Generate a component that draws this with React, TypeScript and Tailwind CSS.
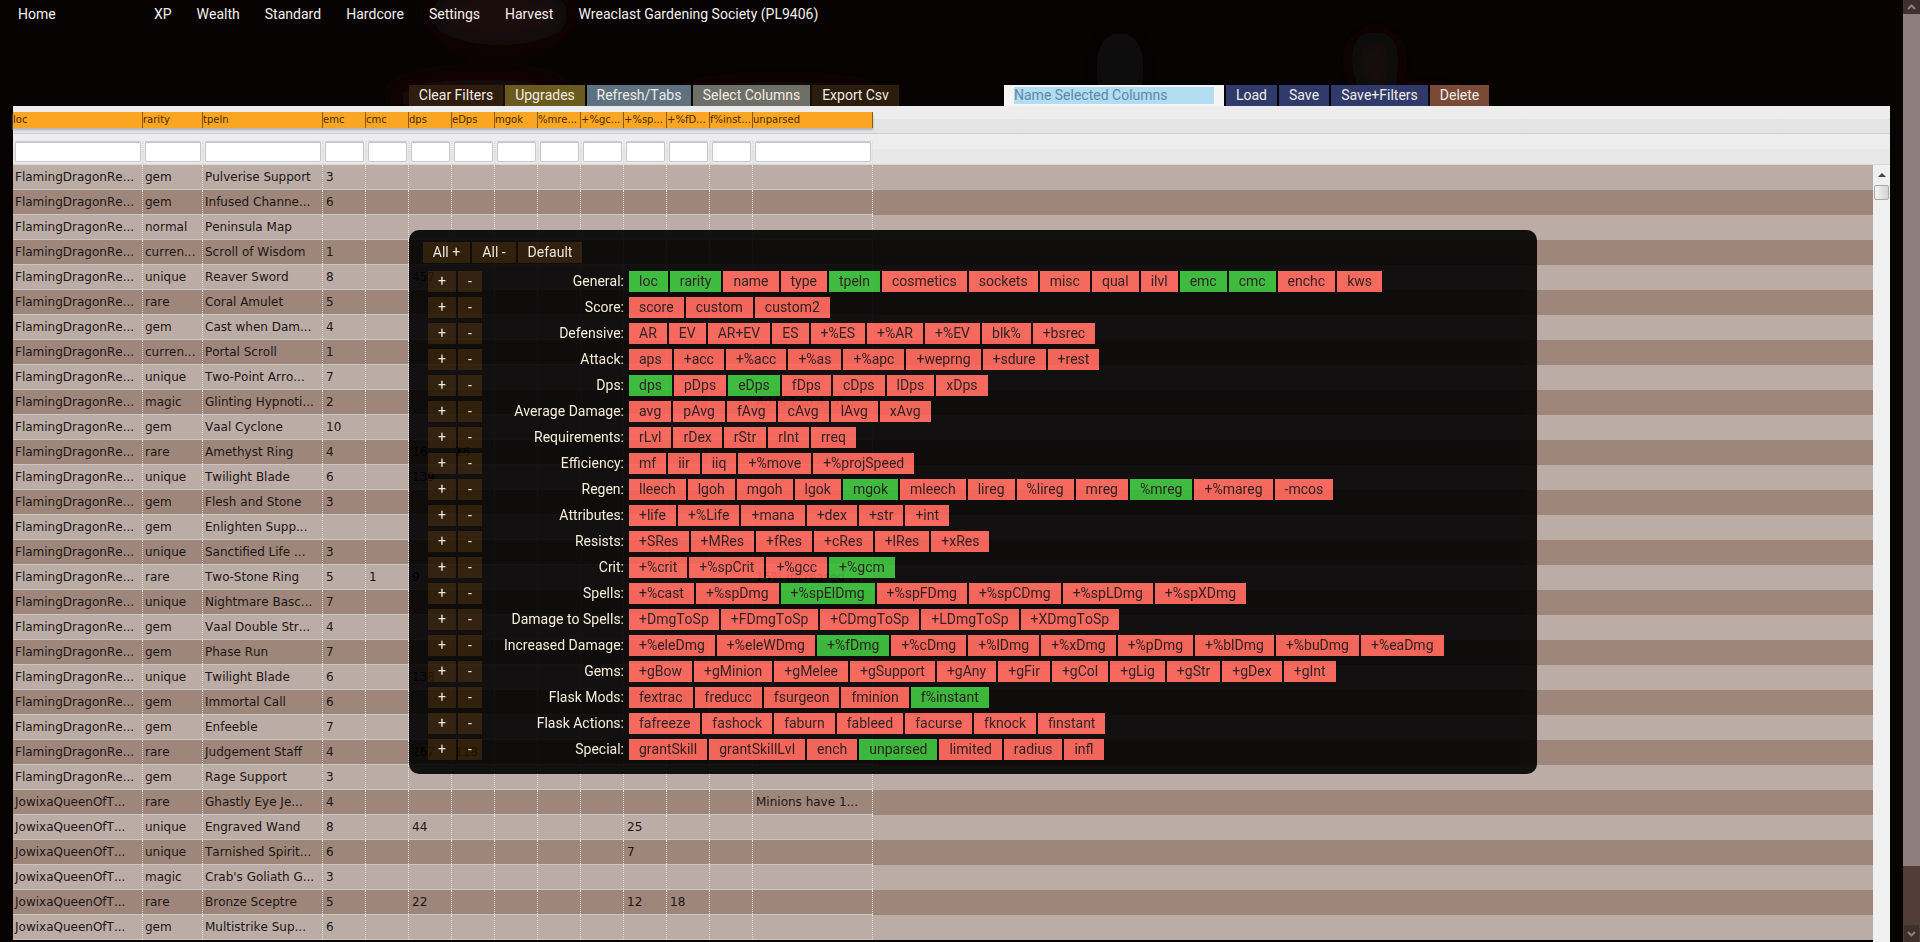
import React from 'react'

type Row = { rarity: string; name: string; emc?: string; cells?: Record<number, string>; owner?: string }

const FLAMING = 'FlamingDragonRe...'
const JOWIXA = 'JowixaQueenOfT...'

const headers = ['loc', 'rarity', 'tpeln', 'emc', 'cmc', 'dps', 'eDps', 'mgok', '%mre...', '+%gc...', '+%sp...', '+%fD...', 'f%inst...', 'unparsed']

const rows: Row[] = [
  { rarity: 'gem', name: 'Pulverise Support', emc: '3' },
  { rarity: 'gem', name: 'Infused Channe...', emc: '6' },
  { rarity: 'normal', name: 'Peninsula Map' },
  { rarity: 'curren...', name: 'Scroll of Wisdom', emc: '1' },
  { rarity: 'unique', name: 'Reaver Sword', emc: '8', cells: { 5: '457' } },
  { rarity: 'rare', name: 'Coral Amulet', emc: '5' },
  { rarity: 'gem', name: 'Cast when Dam...', emc: '4' },
  { rarity: 'curren...', name: 'Portal Scroll', emc: '1' },
  { rarity: 'unique', name: 'Two-Point Arro...', emc: '7' },
  { rarity: 'magic', name: 'Glinting Hypnoti...', emc: '2', cells: { 13: 'Adds 1 to 4 Ph...' } },
  { rarity: 'gem', name: 'Vaal Cyclone', emc: '10' },
  { rarity: 'rare', name: 'Amethyst Ring', emc: '4', cells: { 5: '16', 6: '16' } },
  { rarity: 'unique', name: 'Twilight Blade', emc: '6', cells: { 5: '139' } },
  { rarity: 'gem', name: 'Flesh and Stone', emc: '3' },
  { rarity: 'gem', name: 'Enlighten Supp...' },
  { rarity: 'unique', name: 'Sanctified Life ...', emc: '3' },
  { rarity: 'rare', name: 'Two-Stone Ring', emc: '5', cells: { 4: '1', 5: '9', 13: '15% increased ...' } },
  { rarity: 'unique', name: 'Nightmare Basc...', emc: '7' },
  { rarity: 'gem', name: 'Vaal Double Str...', emc: '4' },
  { rarity: 'gem', name: 'Phase Run', emc: '7' },
  { rarity: 'unique', name: 'Twilight Blade', emc: '6', cells: { 5: '138' } },
  { rarity: 'gem', name: 'Immortal Call', emc: '6' },
  { rarity: 'gem', name: 'Enfeeble', emc: '7' },
  { rarity: 'rare', name: 'Judgement Staff', emc: '4', cells: { 5: '267', 6: '118' } },
  { rarity: 'gem', name: 'Rage Support', emc: '3' },
  { owner: JOWIXA, rarity: 'rare', name: 'Ghastly Eye Je...', emc: '4', cells: { 13: 'Minions have 1...' } },
  { owner: JOWIXA, rarity: 'unique', name: 'Engraved Wand', emc: '8', cells: { 5: '44', 10: '25' } },
  { owner: JOWIXA, rarity: 'unique', name: 'Tarnished Spirit...', emc: '6', cells: { 10: '7' } },
  { owner: JOWIXA, rarity: 'magic', name: "Crab's Goliath G...", emc: '3' },
  { owner: JOWIXA, rarity: 'rare', name: 'Bronze Sceptre', emc: '5', cells: { 5: '22', 10: '12', 11: '18' } },
  { owner: JOWIXA, rarity: 'gem', name: 'Multistrike Sup...', emc: '6' },
]

const groups: [string, string[], string[]][] = [
  ['General', ['loc', 'rarity', 'name', 'type', 'tpeln', 'cosmetics', 'sockets', 'misc', 'qual', 'ilvl', 'emc', 'cmc', 'enchc', 'kws'], ['loc', 'rarity', 'tpeln', 'emc', 'cmc']],
  ['Score', ['score', 'custom', 'custom2'], []],
  ['Defensive', ['AR', 'EV', 'AR+EV', 'ES', '+%ES', '+%AR', '+%EV', 'blk%', '+bsrec'], []],
  ['Attack', ['aps', '+acc', '+%acc', '+%as', '+%apc', '+weprng', '+sdure', '+rest'], []],
  ['Dps', ['dps', 'pDps', 'eDps', 'fDps', 'cDps', 'lDps', 'xDps'], ['dps', 'eDps']],
  ['Average Damage', ['avg', 'pAvg', 'fAvg', 'cAvg', 'lAvg', 'xAvg'], []],
  ['Requirements', ['rLvl', 'rDex', 'rStr', 'rInt', 'rreq'], []],
  ['Efficiency', ['mf', 'iir', 'iiq', '+%move', '+%projSpeed'], []],
  ['Regen', ['lleech', 'lgoh', 'mgoh', 'lgok', 'mgok', 'mleech', 'lireg', '%lireg', 'mreg', '%mreg', '+%mareg', '-mcos'], ['mgok', '%mreg']],
  ['Attributes', ['+life', '+%Life', '+mana', '+dex', '+str', '+int'], []],
  ['Resists', ['+SRes', '+MRes', '+fRes', '+cRes', '+lRes', '+xRes'], []],
  ['Crit', ['+%crit', '+%spCrit', '+%gcc', '+%gcm'], ['+%gcm']],
  ['Spells', ['+%cast', '+%spDmg', '+%spElDmg', '+%spFDmg', '+%spCDmg', '+%spLDmg', '+%spXDmg'], ['+%spElDmg']],
  ['Damage to Spells', ['+DmgToSp', '+FDmgToSp', '+CDmgToSp', '+LDmgToSp', '+XDmgToSp'], []],
  ['Increased Damage', ['+%eleDmg', '+%eleWDmg', '+%fDmg', '+%cDmg', '+%lDmg', '+%xDmg', '+%pDmg', '+%blDmg', '+%buDmg', '+%eaDmg'], ['+%fDmg']],
  ['Gems', ['+gBow', '+gMinion', '+gMelee', '+gSupport', '+gAny', '+gFir', '+gCol', '+gLig', '+gStr', '+gDex', '+gInt'], []],
  ['Flask Mods', ['fextrac', 'freducc', 'fsurgeon', 'fminion', 'f%instant'], ['f%instant']],
  ['Flask Actions', ['fafreeze', 'fashock', 'faburn', 'fableed', 'facurse', 'fknock', 'finstant'], []],
  ['Special', ['grantSkill', 'grantSkillLvl', 'ench', 'unparsed', 'limited', 'radius', 'infl'], ['unparsed']],
]

const navItems = ['XP', 'Wealth', 'Standard', 'Hardcore', 'Settings', 'Harvest', 'Wreaclast Gardening Society (PL9406)']

const colGrid = 'grid w-[860px] grid-cols-[130px_60px_120px_repeat(10,43px)_120px]'

const Backdrop = () => (
  <svg className="absolute left-0 top-0" width="1903" height="106" aria-hidden="true">
    <defs>
      <filter id="soft"><feGaussianBlur stdDeviation="14" /></filter>
    </defs>
    <g filter="url(#soft)">
      <ellipse cx="500" cy="15" rx="70" ry="30" fill="#1c110a" />
      <ellipse cx="480" cy="98" rx="90" ry="18" fill="#22110a" />
      <ellipse cx="780" cy="98" rx="110" ry="16" fill="#190c07" />
      <ellipse cx="1120" cy="70" rx="24" ry="40" fill="#100907" />
      <ellipse cx="1375" cy="60" rx="24" ry="30" fill="#120b08" />
      <ellipse cx="1420" cy="102" rx="70" ry="12" fill="#150a08" />
    </g>
  </svg>
)

const ToolButton = ({ label, className }: { label: string; className: string }) => (
  <button type="button" className={`flex h-[21px] items-center justify-center text-[14px] text-[#f2ece4] ${className}`}>
    {label}
  </button>
)

const ModalButton = ({ label, className }: { label: string; className: string }) => (
  <button type="button" className={`flex h-[21px] items-center justify-center bg-[#251500] text-[14px] text-[#f4f0e8] ${className}`}>
    {label}
  </button>
)

const ColumnPicker = () => (
  <div className="absolute left-[409px] top-[230px] h-[544px] w-[1128px] rounded-[10px] bg-black px-[14px] pt-[12px] opacity-90 font-['Roboto',sans-serif]">
    <div className="flex gap-[2px]">
      <ModalButton label="All +" className="w-[47px]" />
      <ModalButton label="All -" className="w-[44px]" />
      <ModalButton label="Default" className="w-[64px]" />
    </div>
    <div className="mt-[8px] flex flex-col gap-[5px]">
      {groups.map(([label, chips, active]) => (
        <div key={label} className="flex h-[21px] items-center">
          <ModalButton label="+" className="ml-[5px] w-[28px]" />
          <ModalButton label="-" className="ml-[2px] w-[24px]" />
          <span className="ml-[10px] w-[132px] text-right text-[14px] whitespace-nowrap text-[#fff6e0]">{label}:</span>
          <div className="ml-[5px] flex gap-[2px]">
            {chips.map((chip) => (
              <span
                key={chip}
                className={`flex h-[21px] items-center px-[10px] text-[14px] whitespace-nowrap text-[#201414] ${active.includes(chip) ? 'bg-[#32bd36]' : 'bg-[#fc6258]'}`}
              >
                {chip}
              </span>
            ))}
          </div>
        </div>
      ))}
    </div>
  </div>
)

const TableScrollbar = () => (
  <div className="flex w-[17px] flex-col items-center bg-[#f0f0f0]">
    <div className="mt-[8px] h-0 w-0 border-x-[4px] border-b-[4px] border-x-transparent border-b-[#444]" />
    <div className="mt-[8px] h-[15px] w-[15px] rounded-[2px] border border-[#a8a8a8] bg-gradient-to-r from-[#f4f4f4] to-[#d4d4d4]" />
  </div>
)

const PageScrollbar = () => (
  <div className="flex h-[942px] w-[17px] flex-col bg-[#523d36]">
    <div className="flex h-[14px] items-center justify-center bg-[#3e302d]">
      <svg width="9" height="6" viewBox="0 0 9 6" fill="none" stroke="#8f7f7c" strokeWidth="2"><path d="M1 5l3.5-3.5L8 5" /></svg>
    </div>
    <div className="h-[852px] bg-[#8f7f7c]" />
    <div className="flex-1" />
    <div className="mx-auto flex h-[17px] w-[15px] items-center justify-center bg-[#3e302d]">
      <svg width="9" height="6" viewBox="0 0 9 6" fill="none" stroke="#8f7f7c" strokeWidth="2"><path d="M1 1l3.5 3.5L8 1" /></svg>
    </div>
  </div>
)

const App = () => {
  return (
    <div className="flex h-[942px] overflow-hidden bg-[#070303] [font-kerning:none]">
      <div className="relative w-[1903px] overflow-hidden">
        <Backdrop />

        <nav className="relative flex h-[28px] items-center pl-[18px] text-[14px] text-[#f4f0ea] font-['Roboto',sans-serif]">
          <span className="w-[136px]">Home</span>
          <div className="flex gap-[25px]">
            {navItems.map((item) => (
              <span key={item} className="whitespace-nowrap">{item}</span>
            ))}
          </div>
        </nav>

        <div className="relative mt-[57px] flex pl-[409px] font-['Roboto',sans-serif]">
          <div className="flex gap-[2px]">
            <ToolButton label="Clear Filters" className="w-[94px] bg-[#2e1c0c]" />
            <ToolButton label="Upgrades" className="w-[80px] bg-[#6b5a1d]" />
            <ToolButton label="Refresh/Tabs" className="w-[104px] bg-[#5d7180]" />
            <ToolButton label="Select Columns" className="w-[117px] bg-[#6e6f66]" />
            <ToolButton label="Export Csv" className="w-[87px] bg-[#2c1c0a]" />
          </div>
          <div className="ml-[105px] flex h-[21px] w-[220px] items-center justify-center bg-[#f4f4f4]">
            <input
              type="text"
              placeholder="Name Selected Columns"
              className="h-[17px] w-[200px] bg-[#b2dcf0] text-[14px] outline-none placeholder:text-[#5d8aa8]"
            />
          </div>
          <div className="ml-[2px] flex gap-[2px]">
            <ToolButton label="Load" className="w-[51px] bg-[#2f3a6b]" />
            <ToolButton label="Save" className="w-[50px] bg-[#2f3a6b]" />
            <ToolButton label="Save+Filters" className="w-[97px] bg-[#2f3a6b]" />
            <ToolButton label="Delete" className="w-[59px] bg-[#7a4a38]" />
          </div>
        </div>

        <div className="relative ml-[13px] flex h-[836px] w-[1877px] flex-col font-['DejaVu_Sans',sans-serif]">
          <div className="h-[28px] border-b border-[#d0d0d0] bg-gradient-to-b from-[#ededed] from-50% to-[#e4e4e4] to-50% pt-[6px]">
            <div className={`${colGrid} h-[16px] bg-[#fba623] shadow-[0_2px_2px_#b0b0b8]`}>
              {headers.map((header) => (
                <div key={header} className="overflow-hidden whitespace-nowrap border-r border-[#8a5a10] text-[10px] leading-[16px] text-[#4a2c00]">
                  {header}
                </div>
              ))}
            </div>
          </div>
          <div className="h-[31px] border-b border-[#d8d8d8] bg-gradient-to-b from-[#ededed] from-50% to-[#e8e8e8] to-50% pt-[7px]">
            <div className={`${colGrid} h-[23px]`}>
              {headers.map((header) => (
                <div key={header} className="border-x border-dotted border-[#ddd] px-[1px]">
                  <input type="text" className="block h-[21px] w-full rounded-[2px] border border-t-2 border-[#c8c8d0] bg-white outline-none" />
                </div>
              ))}
            </div>
          </div>

          <div className="flex min-h-0 flex-1">
            <div className="w-[1860px] overflow-hidden">
              {rows.map((row, i) => (
                <div key={i} className={`h-[25px] ${i % 2 === 0 ? 'bg-[#bbaca5]' : 'bg-[#9f867b]'}`}>
                  <div className={`${colGrid} h-[25px] border-b border-[#c9c5c2] text-[12px] leading-[24px] whitespace-nowrap text-[#1c1614]`}>
                    <div className="overflow-hidden border-r border-dotted border-[#e4e0dc] pl-[2px]">{row.owner ?? FLAMING}</div>
                    <div className="overflow-hidden border-r border-dotted border-[#e4e0dc] pl-[2px]">{row.rarity}</div>
                    <div className="overflow-hidden border-r border-dotted border-[#e4e0dc] pl-[2px]">{row.name}</div>
                    <div className="overflow-hidden border-r border-dotted border-[#e4e0dc] pl-[3px]">{row.emc}</div>
                    {headers.slice(4).map((header, j) => (
                      <div key={header} className="overflow-hidden border-r border-dotted border-[#e4e0dc] pl-[3px]">
                        {row.cells?.[j + 4]}
                      </div>
                    ))}
                  </div>
                </div>
              ))}
            </div>
            <TableScrollbar />
          </div>
        </div>

        <ColumnPicker />
      </div>
      <PageScrollbar />
    </div>
  )
}

export default App
